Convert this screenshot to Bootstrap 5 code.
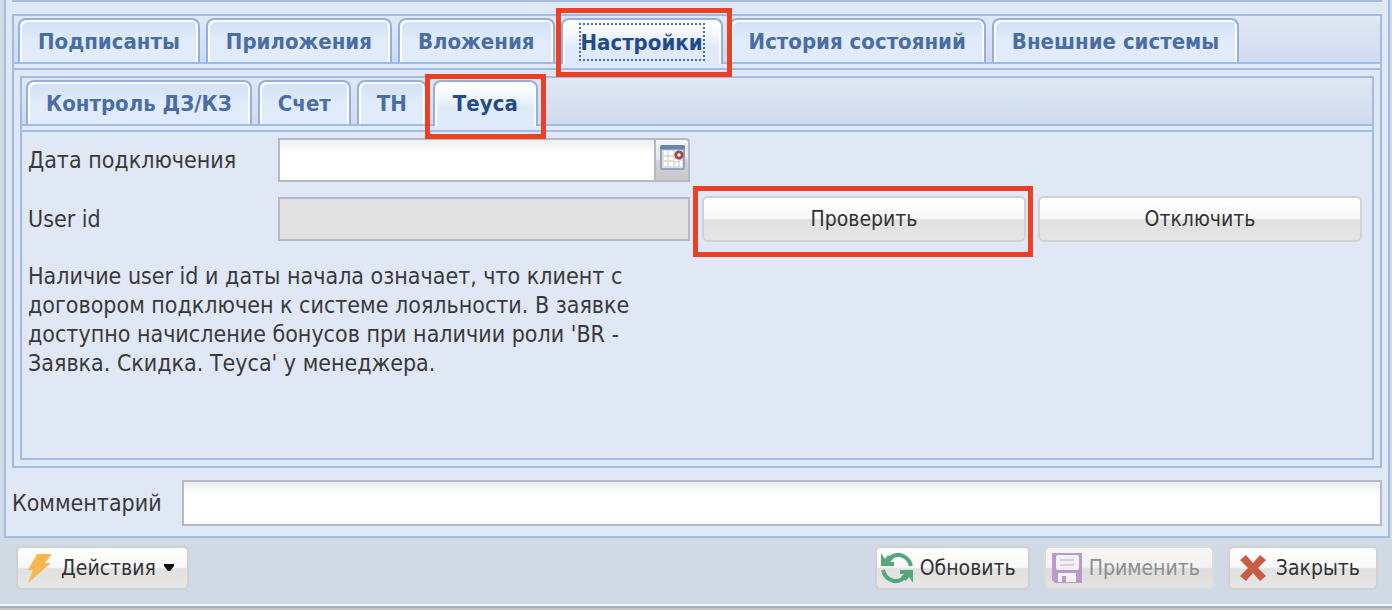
<!DOCTYPE html>
<html lang="ru">
<head>
<meta charset="utf-8">
<meta name="viewport" content="width=device-width, initial-scale=1">
<title>Договор — Настройки</title>
<link href="https://cdn.jsdelivr.net/npm/bootstrap@5.3.0/dist/css/bootstrap.min.css" rel="stylesheet">
<style>
:root { --line: #a0bbe6; --panel: #e0e7f5; --strip: #dfebfa; --field-line: #b5b8c8; --accent: #ec4024; }
body { background: #cfdae5; color: #3a3a3a; font: 23px/29px "DejaVu Sans Condensed", "Open Sans", Tahoma, sans-serif; }
.window-box { border-bottom: 2px solid #c2c3c4; box-shadow: inset 0 -2px #a5b1c8, inset 0 -4px #f0f5fb; padding: 0 2px 18px 4px; }
.window-panel { background: var(--panel); border: 2px solid var(--line); border-top: 0; padding: 0 6px 10px; }
.upper-edge { border-bottom: 2px solid var(--line); height: 2px; margin-bottom: 12px; }
.tab-panel { border: 2px solid var(--line); }
.tab-body { padding: 6px; }
.tab-bar { background: linear-gradient(#dfe8f3, #cfdbee); border-bottom: 2px solid var(--line); height: 48px; padding: 2px 4px 0; gap: 6px; }
.tab-strip { background: var(--strip); border-bottom: 2px solid var(--line); height: 6px; }
.tab-btn { background: linear-gradient(#d2e0f5, #e0ecfb 50%); border: 2px solid #94b0de; border-bottom: 0; border-radius: 8px 8px 0 0; box-shadow: inset 2px 2px #fff, inset -2px 0 #fff; color: #4a6da3; font-size: 22px; font-weight: 700; line-height: 26px; height: 44px; padding: 2px 18px 0; white-space: nowrap; }
.tab-btn.active { background: linear-gradient(#fff, #f4f8fe 30%, #dfebfa 60%); color: #234a8b; height: 46px; padding: 0 18px; }
.focus-box { outline: 2px dotted #4a6da3; display: block; height: 34px; line-height: 36px; }
.marked { position: relative; }
.marked::after { content: ""; position: absolute; inset: -12px -11px -13px -7px; border: 5px solid var(--accent); pointer-events: none; z-index: 2; }
.marked.tab-inner::after { inset: -8px -10px -13px -10px; }
.marked.check-cell::after { inset: -10px -7px -15px -9px; }
.settings-grid { display: grid; grid-template-columns: 238px 412fr 324fr 324fr; gap: 14px 12px; padding: 6px 10px 6px 6px; align-items: center; }
.note-text { padding: 14px 6px 8px; }
.field-box { border: 2px solid var(--field-line); border-radius: 0; height: 44px; padding: 4px 8px; font-size: 23px; background: linear-gradient(#edf0f0, #fff 14px); }
.field-box:disabled { background: #e1e1e1; opacity: 1; }
.date-btn { width: 36px; border: 2px solid var(--field-line); border-left: 0; border-top-right-radius: 4px; background: linear-gradient(#f5f5f5, #e6e6e6 48%, #d2d2d2 52%, #cacaca); padding: 0 0 4px; }
.soft-btn { --bs-btn-disabled-opacity: 1; border: 2px solid #d1d1d1; border-radius: 6px; background: linear-gradient(#fff, #f8f8f8 48%, #e1e1e1 52%, #e6e6e6); color: #333; font-size: 21px; line-height: 28px; padding: 6px 12px; height: 44px; white-space: nowrap; }
.soft-btn:disabled { color: #8e8e8e; border-color: #dcdcdc; background: linear-gradient(#f6f6f6, #f2f2f2 48%, #dcdcdc 52%, #e2e2e2); }
.soft-btn svg, .date-btn svg { display: block; flex: none; }
.form-btn { height: 46px; }
.tool-btn { padding: 0 12px 0 4px; gap: 7px; }
.tool-btn.close-btn { padding: 0 16px 0 7px; }
.comment-row { padding-top: 12px; gap: 20px; }
.comment-row .field-box { height: 46px; }
.tool-row { padding: 8px 12px 0; gap: 14px; }
</style>
</head>
<body class="min-vh-100 d-flex flex-column">
<main class="window-box flex-grow-1 d-flex flex-column">
  <section class="window-panel flex-grow-1 d-flex flex-column">
    <div class="upper-edge"></div>
    <div class="tab-panel flex-grow-1 d-flex flex-column">
      <div class="tab-bar d-flex" role="tablist">
        <button class="tab-btn" type="button" role="tab">Подписанты</button>
        <button class="tab-btn" type="button" role="tab">Приложения</button>
        <button class="tab-btn" type="button" role="tab">Вложения</button>
        <button class="tab-btn active marked" type="button" role="tab" aria-selected="true"><span class="focus-box">Настройки</span></button>
        <button class="tab-btn" type="button" role="tab">История состояний</button>
        <button class="tab-btn" type="button" role="tab">Внешние системы</button>
      </div>
      <div class="tab-strip"></div>
      <div class="tab-body flex-grow-1 d-flex flex-column">
        <div class="tab-panel flex-grow-1">
          <div class="tab-bar d-flex" role="tablist">
            <button class="tab-btn" type="button" role="tab">Контроль ДЗ/КЗ</button>
            <button class="tab-btn" type="button" role="tab">Счет</button>
            <button class="tab-btn" type="button" role="tab">ТН</button>
            <button class="tab-btn active marked tab-inner" type="button" role="tab" aria-selected="true">Теуса</button>
          </div>
          <div class="tab-strip"></div>
          <form class="settings-grid">
            <label for="start-date">Дата подключения</label>
            <div class="d-flex">
              <input class="form-control field-box" id="start-date" type="text">
              <button class="date-btn" type="button" aria-label="Выбрать дату">
                <svg width="32" height="32" viewBox="0 0 32 32"><rect x="4" y="3" width="25" height="25" rx="2" fill="#8aa5cb"/><path d="M4 7V5q0-2 2-2h21q2 0 2 2v2z" fill="#6685b3"/><path d="M6 8h21v18H6z" fill="#dedfe3"/><path d="M8 9h3v4H8zm5 0h4v4h-4zM8 15h3v3H8zm5 0h4v3h-4zm6 2h3v2h-3zM8 20h3v4H8zm5 0h4v4h-4zm6 1h3v3h-3zm5-2h2v5h-2z" fill="#fff"/><circle cx="23" cy="13" r="3.2" fill="#fff" stroke="#a34848" stroke-width="2.8"/></svg>
              </button>
            </div>
            <span></span><span></span>
            <label for="user-id">User id</label>
            <input class="form-control field-box" id="user-id" type="text" disabled>
            <div class="marked check-cell"><button class="btn soft-btn form-btn w-100" type="button">Проверить</button></div>
            <button class="btn soft-btn form-btn" type="button">Отключить</button>
          </form>
          <p class="note-text mb-0">Наличие user id и даты начала означает, что клиент с<br>договором подключен к системе лояльности. В заявке<br>доступно начисление бонусов при наличии роли 'BR -<br>Заявка. Скидка. Теуса' у менеджера.</p>
        </div>
      </div>
    </div>
    <div class="comment-row d-flex align-items-center">
      <label for="comment">Комментарий</label>
      <input class="form-control field-box" id="comment" type="text">
    </div>
  </section>
  <div class="tool-row d-flex">
    <button class="btn soft-btn tool-btn d-flex align-items-center me-auto" type="button">
      <svg width="32" height="32" viewBox="0 0 32 32"><path d="M15 2h15l-7 9h6L6 31l5-13H6z" fill="#f7b750"/></svg>
      Действия
      <svg width="12" height="8" viewBox="0 0 12 8"><path d="M1 0h10v2L7 7H5L1 2z" fill="#111"/></svg>
    </button>
    <button class="btn soft-btn tool-btn d-flex align-items-center" type="button">
      <svg width="32" height="32" viewBox="0 0 32 32"><g fill="none" stroke="#58a67b" stroke-width="4"><path d="M6 9Q12 2 19 3q9 2 11 11"/><path d="M26 23q-6 7-13 6Q4 27 2 18"/></g><path d="M0 1v13h13V10H9l3-3-5-4-3 4zM32 31V18H19v4h4l-3 3 5 4 3-4z" fill="#58a67b"/></svg>
      Обновить
    </button>
    <button class="btn soft-btn tool-btn d-flex align-items-center" type="button" disabled>
      <svg width="32" height="32" viewBox="0 0 32 32"><path d="M2 1h30v30H5l-3-3z" fill="#b99bca"/><rect x="6" y="3" width="23" height="15" rx="2" fill="#f3f1f5"/><path d="M10 8h14M10 13h14" stroke="#d4d1d8" stroke-width="2"/><path d="M8 21h18v9H8z" fill="#f3f1f5"/><path d="M12 24h4v6h-4z" fill="#b99bca"/></svg>
      Применить
    </button>
    <button class="btn soft-btn tool-btn close-btn d-flex align-items-center" type="button">
      <svg width="32" height="32" viewBox="0 0 32 32"><path d="M9 3l7 8 7-8 6 5-8 8 8 8-6 5-7-8-7 8-6-5 8-8-8-8z" fill="#c65d44"/></svg>
      Закрыть
    </button>
  </div>
</main>
<script src="https://cdn.jsdelivr.net/npm/bootstrap@5.3.0/dist/js/bootstrap.bundle.min.js"></script>
</body>
</html>
